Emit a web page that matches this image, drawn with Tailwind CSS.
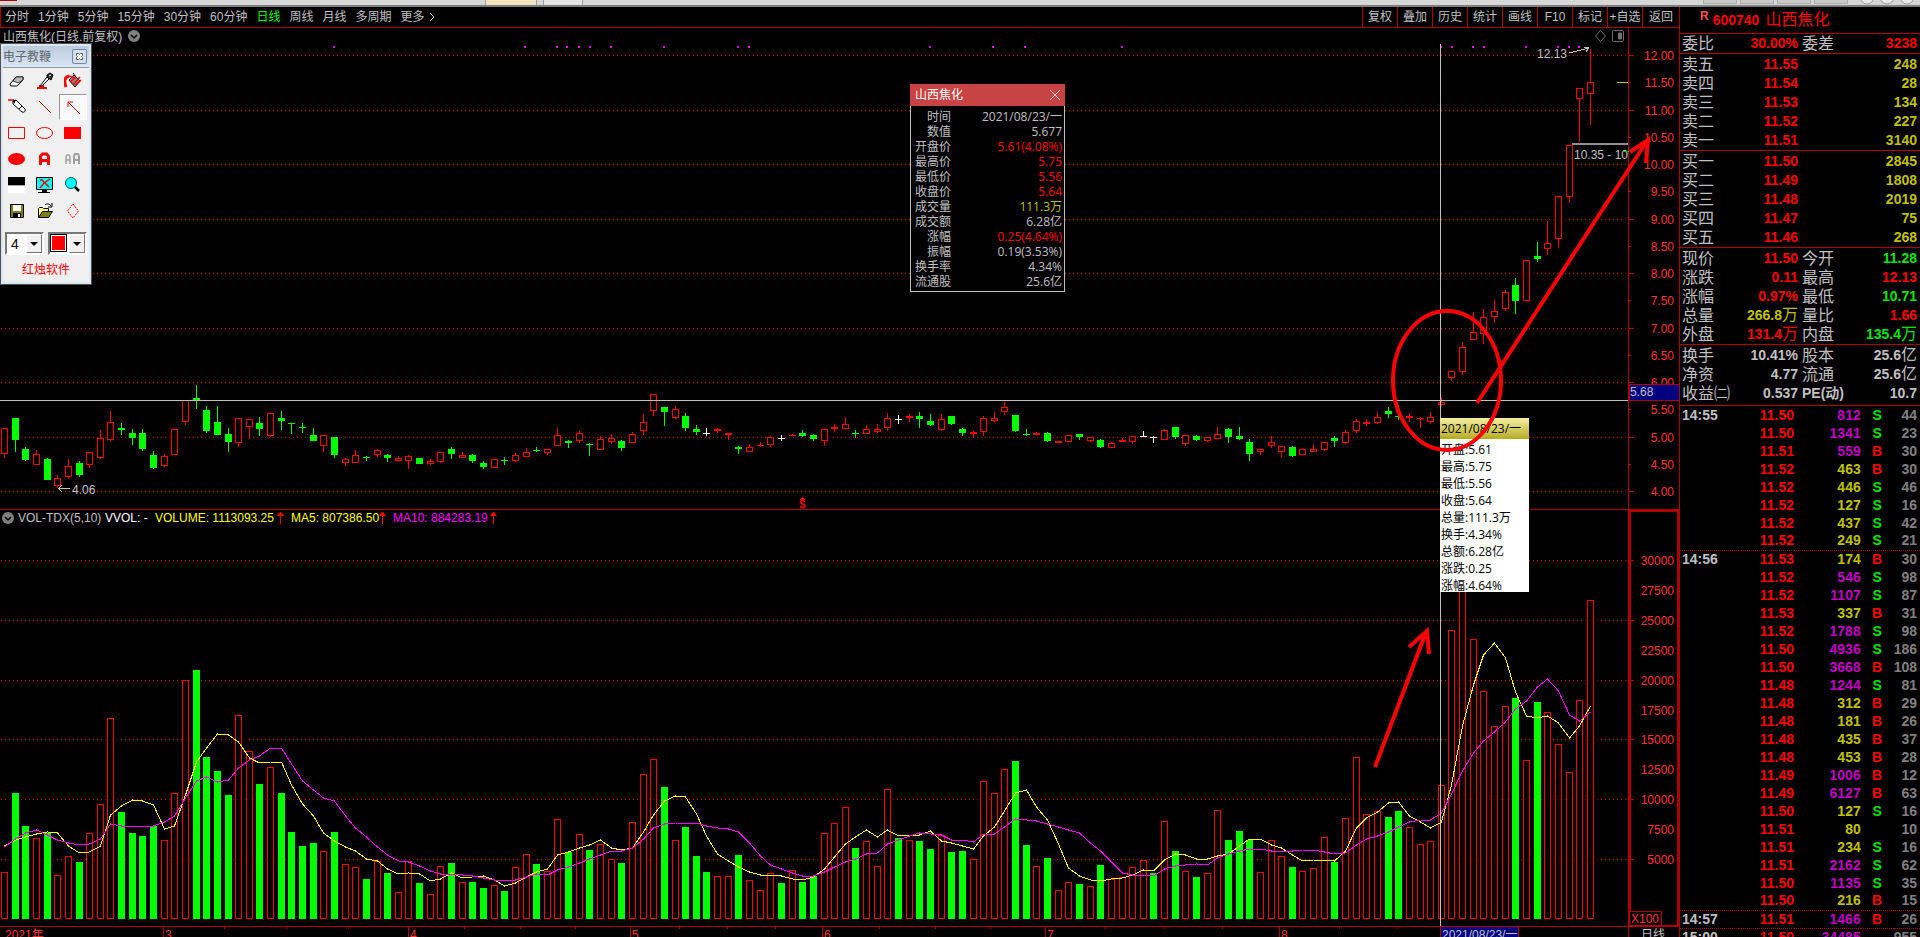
<!DOCTYPE html>
<html lang="zh-CN">
<head>
    <meta charset="UTF-8">
    <meta name="viewport" content="width=device-width, initial-scale=1.0">
    <title>山西焦化 600740 - 日线</title>
    <script src="https://cdn.jsdelivr.net/npm/@tailwindcss/browser@4"></script>
</head>

<body class="bg-black text-[#c0c0c0] text-xs font-['Liberation_Sans','Noto_Sans_CJK_SC',sans-serif]">
    <div class="h-screen flex flex-col overflow-hidden">
        <!-- 顶部窗口边缘 -->
        <div class="h-[7px] shrink-0 flex items-start bg-[#d6d6d6] border-b-2 border-[#7c7f7c] overflow-hidden">
            <div class="w-[17px] h-px bg-[#b00000] mr-auto"></div>
            <div class="w-[52px] h-[5px] bg-[#f0e4c0] border-x border-gray-400"></div>
            <div class="w-[40px] h-[5px] ml-[6px] bg-[#e6e6e6] border-x border-gray-400 mr-[1120px]"></div>
            <div class="flex gap-[3px] mr-3">
                <div class="w-[34px] h-1 bg-[#cacaca] border border-t-0 border-[#aaa]"></div>
                <div class="w-[34px] h-1 bg-[#cacaca] border border-t-0 border-[#aaa]"></div>
                <div class="w-[34px] h-1 bg-[#cacaca] border border-t-0 border-[#aaa]"></div>
                <div class="w-[34px] h-1 bg-[#cacaca] border border-t-0 border-[#aaa]"></div>
            </div>
            <svg class="w-[60px] h-[5px]" viewBox="0 0 60 5" fill="#e8e8e8" stroke="#999">
                <circle cx="7" cy="-3" r="7" /><circle cx="27" cy="-3" r="7" /><circle cx="47" cy="-3" r="7" />
            </svg>
        </div>

        <div class="flex-1 flex min-h-0">
            <!-- 左侧图表区 -->
            <main class="flex-1 min-w-0 relative">
                <nav class="h-[21px] flex justify-between border-b border-l border-[#b00000] leading-5">
                    <div class="flex gap-[9px] pl-1 whitespace-nowrap">
                        <button>分时</button>
                        <button>1分钟</button>
                        <button>5分钟</button>
                        <button>15分钟</button>
                        <button>30分钟</button>
                        <button>60分钟</button>
                        <button class="text-[#00ff00]">日线</button>
                        <button>周线</button>
                        <button>月线</button>
                        <button>多周期</button>
                        <button class="flex items-center gap-1">更多
                            <svg class="w-[6px] h-[10px]" viewBox="0 0 6 10" fill="none" stroke="#c0c0c0"><path d="M1 1l4 4-4 4" /></svg>
                        </button>
                    </div>
                    <div class="flex whitespace-nowrap">
                        <button class="w-[35px] border-l border-[#b00000]">复权</button>
                        <button class="w-[35px] border-l border-[#b00000]">叠加</button>
                        <button class="w-[35px] border-l border-[#b00000]">历史</button>
                        <button class="w-[35px] border-l border-[#b00000]">统计</button>
                        <button class="w-[35px] border-l border-[#b00000]">画线</button>
                        <button class="w-[35px] border-l border-[#b00000]">F10</button>
                        <button class="w-[35px] border-l border-[#b00000]">标记</button>
                        <button class="w-[35px] border-l border-[#b00000]">+自选</button>
                        <button class="w-[37px] border-l border-[#b00000]">返回</button>
                    </div>
                </nav>

                <div class="h-4 flex items-center">
                    <h1 class="pl-[3px] pt-px leading-4">山西焦化(日线.前复权)</h1>
                    <svg class="w-3 h-3 ml-[6px] mr-auto" viewBox="0 0 12 12"><circle cx="6" cy="6" r="6" fill="#808080" /><path d="M3 5l3 3 3-3" fill="none" stroke="#000" stroke-width="1.500" /></svg>
                    <svg class="w-[30px] h-3" viewBox="0 0 30 12" fill="none" stroke="#707070"><path d="M5.500 .5L10.500 6l-5 5.500L.5 6z" /><rect x="17.500" y=".5" width="11" height="11" rx="1" /><path d="M23.500 3h3v6h-3z" fill="#707070" /></svg>
                    <div class="w-[51px] h-4 ml-[3px] border-l border-[#b00000]"></div>
                </div>

                <svg id="chart" class="block w-full" viewBox="0 44 1679 893" shape-rendering="crispEdges"></svg>

                <!-- 成交量指标栏 -->
                <div class="absolute left-0 top-[503px] h-4 pl-[2px] flex items-center leading-4 whitespace-nowrap">
                    <svg class="w-3 h-3 mr-1" viewBox="0 0 12 12"><circle cx="6" cy="6" r="6" fill="#808080" /><path d="M3 5l3 3 3-3" fill="none" stroke="#000" stroke-width="1.500" /></svg>
                    <span class="w-[87px]">VOL-TDX(5,10)</span>
                    <span class="w-[50px] text-white">VVOL: -</span>
                    <span class="w-[122px] text-[#ffff00]">VOLUME: 1113093.25</span>
                    <svg class="w-[7px] h-3" viewBox="0 0 7 12" fill="#f00"><path d="M3 0h1l3 4H4v8H3V4H0z" /></svg>
                    <span class="ml-[7px] w-[88px] text-[#ffff00]">MA5: 807386.50</span>
                    <svg class="w-[7px] h-3" viewBox="0 0 7 12" fill="#f00"><path d="M3 0h1l3 4H4v8H3V4H0z" /></svg>
                    <span class="ml-[7px] w-[97px] text-[#ff00ff]">MA10: 884283.19</span>
                    <svg class="w-[7px] h-3" viewBox="0 0 7 12" fill="#f00"><path d="M3 0h1l3 4H4v8H3V4H0z" /></svg>
                </div>

                <!-- 数值浮窗 -->
                <section class="absolute left-[910px] top-[77px] w-[155px] bg-black border border-t-0 border-[#c0c0c0] font-['Open_Sans','Noto_Sans_CJK_SC',sans-serif]">
                    <header class="h-[22px] -mx-px px-[5px] flex items-center justify-between bg-[#c84444] text-white">
                        <h2>山西焦化</h2>
                        <button aria-label="关闭"><svg class="w-[10px] h-[10px]" viewBox="0 0 10 10" stroke="#f0c8c8"><path d="M0 0l10 10M10 0L0 10" /></svg></button>
                    </header>
                    <table class="w-full mt-[3px] mb-[2px]">
                        <tbody id="infoRows"></tbody>
                    </table>
                </section>

                <!-- 十字光标提示 -->
                <section class="absolute left-[1440px] top-[411px] w-[89px] h-[174px] bg-white text-black font-['Open_Sans','Noto_Sans_CJK_SC',sans-serif]">
                    <h2 class="h-[21px] pl-px leading-[21px] bg-gradient-to-b from-[#f6f0a0] to-[#b4ac10] whitespace-nowrap">2021/08/23/一</h2>
                    <ul id="tipRows" class="pl-px pt-[2px]"></ul>
                </section>

                <!-- 手绘标注 -->
                <svg class="absolute left-0 top-[37px] w-full pointer-events-none" viewBox="0 44 1679 893" fill="none" stroke="#f00" stroke-width="4">
                    <ellipse cx="1447" cy="380.500" rx="54" ry="69.500" />
                    <path d="M1477 403L1647 141M1630 152L1648 140L1646 163" />
                    <path d="M1375 767L1426 632M1409 647L1427 631L1429 654" />
                </svg>

                <!-- 电子教鞭工具箱 -->
                <aside class="absolute left-0 top-[36px] w-[92px] h-[242px] p-[2px] bg-[#dce6f2] border border-[#505050] text-[#404040]">
                    <header class="h-[22px] flex items-center justify-between pr-[2px] bg-gradient-to-b from-[#bccbdc] to-[#dbe6f3] border-b border-[#999]">
                        <h2 class="text-[#606870]">电子教鞭</h2>
                        <button aria-label="关闭" class="w-[15px] h-[15px] flex items-center justify-center border border-[#7888a8] rounded-xs bg-[#d4dfec]">
                            <svg class="w-[7px] h-[7px]" viewBox="0 0 7 7"><path d="M.5 .5h2l1 1 1-1h2v2l-1 1 1 1v2h-2l-1-1-1 1h-2v-2l1-1-1-1z" fill="#fff" stroke="#555" /></svg>
                        </button>
                    </header>
                    <div class="h-[214px] bg-[#f0f0f0]">
                        <div class="grid grid-cols-3 w-[84px] [&_svg]:w-[18px] [&_svg]:h-[18px] [&>button]:h-[26px] [&>button]:flex [&>button]:items-center [&>button]:justify-center">
                            <button aria-label="橡皮"><svg viewBox="0 0 18 18"><path d="M2 12l6-7h7v3l-6 6H3z" fill="#fff" stroke="#000" /><path d="M8 5h7v3l-5 3-5-2z" fill="#bbb" stroke="#000" stroke-width=".7" /></svg></button>
                            <button aria-label="画笔"><svg viewBox="0 0 18 18"><path d="M1 16h10M3 14h5" stroke="#f00" stroke-width="2" /><path d="M4 14l7-9 2 2-7 7z" fill="#fff" stroke="#000" /><path d="M11 3l3-2 3 2-2 5-4-3z" fill="#333" stroke="#000" /><path d="M13 4l2-1" stroke="#fff" /></svg></button>
                            <button aria-label="填充"><svg viewBox="0 0 18 18"><path d="M5 8l5-5 6 6-5 6z" fill="#888" stroke="#000" /><path d="M2 15C0 10 0 5 5 4" fill="none" stroke="#f00" stroke-width="3" /><path d="M5 4l6 2-5 4M9 13l7-8M12 13l5-5" fill="none" stroke="#f00" stroke-width="1.500" /><path d="M9 1l3 4" stroke="#000" /></svg></button>
                            <button aria-label="铅笔"><svg viewBox="0 0 18 18"><path d="M0 2h6" stroke="#f00" stroke-width="1.500" /><path d="M5 3l3-1 9 9c1 2-1 4-3 3L5 6z" fill="#fff" stroke="#000" /><path d="M5 3l3-1-2 4z" fill="#000" /><path d="M11 11l3-3" stroke="#000" /></svg></button>
                            <button aria-label="直线"><svg viewBox="0 0 18 18"><path d="M3 3l12 12" stroke="#f00" /></svg></button>
                            <button aria-label="箭头" class="bg-[#fafafa] border border-t-[#999] border-l-[#999] border-white"><svg viewBox="0 0 18 18"><path d="M4 4l12 12M4 9V4h5" fill="none" stroke="#f00" /></svg></button>
                            <button aria-label="矩形"><svg viewBox="0 0 18 18"><path d="M.5 3.500h16v11H.5z" fill="none" stroke="#f00" /></svg></button>
                            <button aria-label="椭圆"><svg viewBox="0 0 18 18"><ellipse cx="8.500" cy="9" rx="8" ry="5.500" fill="none" stroke="#f00" /></svg></button>
                            <button aria-label="实心矩形"><svg viewBox="0 0 18 18"><path d="M0 3h17v12H0z" fill="#f00" /></svg></button>
                            <button aria-label="实心椭圆"><svg viewBox="0 0 18 18"><ellipse cx="8.500" cy="9" rx="8.500" ry="6" fill="#f00" /></svg></button>
                            <button aria-label="文字"><svg viewBox="0 0 18 18"><path d="M4.500 15V6l2-2h4l2 2v9M4 10.500h9" fill="none" stroke="#f00" stroke-width="3" /></svg></button>
                            <button aria-label="文字大小"><svg viewBox="0 0 18 18" fill="none" stroke="#a0a0a0"><path d="M2 14V7l1-2h2l1 2v7M2 10h4" stroke-width="1.500" /><path d="M10 14V6l1-2h3l1 2v8M10 10h5" stroke-width="2" /></svg></button>
                            <button aria-label="黑白板"><svg viewBox="0 0 18 18"><path d="M0 1h17v8H0z" /><path d="M0 9h17v1H0z" fill="#aaa" /><path d="M0 10h17v7H0z" fill="#fff" /></svg></button>
                            <button aria-label="清屏"><svg viewBox="0 0 18 18"><path d="M.5 1.500h16v12H.5z" fill="#0ff" stroke="#000" /><path d="M4 4h2l7 7M14 3l-6 4-4 5" fill="none" stroke="#f00" stroke-width="1.500" /><path d="M6 14h5v2h3v1H2v-1h4z" /></svg></button>
                            <button aria-label="放大"><svg viewBox="0 0 18 18"><circle cx="7" cy="7" r="5.500" fill="#0ff" stroke="#056" /><path d="M11 11l4 4" stroke="#000" stroke-width="2.500" /></svg></button>
                            <button aria-label="保存"><svg viewBox="0 0 18 18"><path d="M2.500 2.500h13v13h-13z" fill="#808000" stroke="#000" /><path d="M5 3h8v6H5z" fill="#fff" /><path d="M5 11h8v5H5z" /><path d="M10 12h2v3h-2z" fill="#fff" /></svg></button>
                            <button aria-label="打开"><svg viewBox="0 0 18 18"><path d="M2.500 15.500V6.500l1-1h3l1 1h5v3" fill="#ffff80" stroke="#000" /><path d="M2.500 15.500l4-6h10l-4 6z" fill="#808000" stroke="#000" /><path d="M9 3c2-2 5-1 6 1m1-3v4h-4" fill="none" stroke="#000" /></svg></button>
                            <button aria-label="菱形"><svg viewBox="0 0 18 18"><path d="M9 2l5.500 7L9 16 3.500 9z" fill="none" stroke="#f00" stroke-dasharray="2 1" /></svg></button>
                        </div>
                        <div class="flex gap-1 px-[2px] mt-2">
                            <label class="relative w-[39px] h-[23px] bg-white border-2 border-[#777] border-r-white border-b-white">
                                <select aria-label="线宽" class="appearance-none w-full h-full pl-1 text-sm leading-4 text-black"><option>4</option></select>
                                <span class="absolute right-0 top-0 w-4 h-[19px] flex items-center justify-center bg-[#f0f0f0] border border-white border-r-[#777] border-b-[#777] pointer-events-none"><svg class="w-2 h-1" viewBox="0 0 8 4"><path d="M0 0h8L4 4z" /></svg></span>
                            </label>
                            <label class="relative w-[39px] h-[23px] bg-white border-2 border-[#777] border-r-white border-b-white">
                                <select aria-label="颜色" class="appearance-none block w-[17px] h-[18px] border border-black bg-[#ff0000] text-transparent outline outline-white -outline-offset-2"><option>红</option></select>
                                <span class="absolute right-0 top-0 w-4 h-[19px] flex items-center justify-center bg-[#f0f0f0] border border-white border-r-[#777] border-b-[#777] pointer-events-none"><svg class="w-2 h-1" viewBox="0 0 8 4"><path d="M0 0h8L4 4z" /></svg></span>
                            </label>
                        </div>
                        <p class="mt-[7px] text-center leading-4 text-[#ff0000]">红烛软件</p>
                    </div>
                </aside>
            </main>

            <!-- 右侧行情栏 -->
            <aside class="w-[241px] shrink-0 border-l border-[#b00000] text-sm font-bold">
                <h2 class="h-[27px] flex items-center pl-5 text-[#ff0000] border-b border-[#b00000]">
                    <span class="text-xs text-[#ff5050] self-start leading-[18px]">R</span>
                    <span class="ml-1">600740</span>
                    <span class="ml-[6px] text-base font-normal">山西焦化</span>
                </h2>
                <div id="ratio" class="h-5 border-b border-[#b00000]"></div>
                <div id="sell" class="pt-px border-b border-[#b00000]"></div>
                <div id="buy" class="pt-px border-b border-[#b00000]"></div>
                <div id="quote" class="pt-px border-b border-[#b00000]"></div>
                <div id="base" class="pt-px pb-[2px] border-b border-[#b00000]"></div>
                <table class="w-full">
                    <tbody id="ticks"></tbody>
                </table>
            </aside>
        </div>
    </div>

    <script>
        // 每根K线: [类型, 最高, 实体上, 实体下, 最低, 成交量顶]  r=阳 g=阴 w=平盘(绿量) W=平盘(红量)
        const bars = [
            ['r',428,428,454,458,872],['g',418,418,440,452,793],['g',447,449,460,461,826],['r',450,454,465,465,838],['g',458,459,480,480,833],
            ['r',475,478,486,488,875],['r',459,466,477,479,856],['g',461,463,475,477,862],['r',452,452,465,468,833],['r',430,438,458,459,804],
            ['r',411,422,440,441,718],['g',423,428,430,435,812],['g',429,433,438,445,833],['g',429,433,449,451,836],['g',451,455,468,469,826],
            ['r',454,456,466,467,840],['r',429,429,455,455,793],['r',400,400,422,425,680],['g',385,398,401,409,670],['g',406,410,431,433,757],
            ['g',406,422,435,435,771],['g',428,434,442,452,795],['r',418,418,443,447,715],['r',419,419,427,439,751],['g',417,423,429,436,784],
            ['r',413,413,436,437,767],['g',411,418,421,430,793],['g',423,423,424,434,832],['g',423,427,428,433,846],['g',428,435,441,441,843],
            ['r',435,435,446,452,851],['g',437,437,455,458,832],['r',458,459,463,466,864],['r',450,455,463,463,867],['g',456,457,458,461,879],
            ['r',449,450,455,457,861],['g',454,455,458,462,873],['r',456,458,461,461,892],['r',455,456,461,469,861],['g',458,458,464,464,883],
            ['r',459,461,464,465,894],['r',452,452,462,463,866],['g',447,449,454,459,863],['r',452,455,458,458,882],['g',454,455,461,463,882],
            ['g',461,463,467,469,888],['r',459,459,468,468,885],['g',457,460,461,465,891],['r',453,455,461,462,867],['r',448,452,457,457,854],
            ['g',447,450,451,452,864],['r',449,449,453,455,871],['r',428,435,446,446,819],['g',440,441,443,448,852],['r',431,433,441,443,834],
            ['g',443,444,445,456,850],['r',436,439,450,450,844],['r',434,438,442,444,859],['g',440,441,448,451,863],['r',432,434,443,443,822],
            ['r',414,422,431,435,774],['r',394,394,411,416,759],['g',407,407,412,426,787],['r',406,409,418,419,840],['g',413,416,428,431,827],
            ['g',425,429,432,435,856],['w',428,433,434,436,872],['r',428,429,431,433,876],['r',433,433,435,440,876],['g',446,447,449,454,855],
            ['r',444,447,452,452,880],['r',442,445,446,447,890],['r',436,437,445,447,873],['w',435,438,439,441,883],['r',434,435,436,436,870],
            ['g',430,433,436,437,882],['g',434,435,439,441,876],['r',429,429,441,446,833],['r',424,427,429,432,823],['r',417,424,429,429,807],
            ['g',430,433,434,438,848],['r',425,429,434,434,841],['r',424,429,432,433,866],['r',413,418,428,431,789],['w',415,419,420,424,838],
            ['r',414,416,418,422,840],['g',412,416,419,428,841],['g',414,421,425,426,849],['r',414,419,430,431,835],['g',416,416,424,425,852],
            ['g',428,429,433,436,851],['r',431,432,434,438,859],['r',416,418,432,436,781],['r',412,418,421,422,793],['r',402,407,412,415,769],
            ['g',415,415,431,432,761],['g',429,434,435,436,845],['r',432,433,435,435,866],['g',432,433,441,442,858],['r',441,441,443,443,890],
            ['r',435,435,442,442,882],['g',434,434,437,440,884],['r',437,437,441,442,886],['g',439,440,447,448,865],['r',442,443,448,448,879],
            ['r',438,440,442,442,877],['r',436,436,442,444,867],['W',431,436,437,437,860],['w',436,437,438,443,873],['r',429,430,440,440,821],
            ['g',427,427,437,439,851],['r',435,435,444,446,871],['g',435,436,440,441,877],['r',437,437,441,442,873],['r',427,434,439,439,810],
            ['g',428,429,437,443,840],['g',427,436,439,440,831],['g',439,442,454,461,840],['r',449,449,452,455,872],['r',436,442,446,448,840],
            ['r',446,446,452,457,856],['g',446,447,456,457,867],['r',449,449,455,455,871],['r',444,449,452,452,868],['r',442,442,450,451,837],
            ['g',436,438,441,447,862],['r',430,432,443,444,818],['r',419,421,431,433,757],['r',419,422,424,426,814],['r',412,417,423,424,811],
            ['g',407,411,414,418,817],['g',405,416,417,420,811],['r',413,416,418,422,827],['r',417,418,419,428,844],['r',412,417,422,424,841],
            ['r',397,402,405,406,785],['r',371,371,378,381,630],['r',342,347,372,375,529],['r',312,332,340,340,639],['r',309,317,334,344,691],
            ['r',300,311,317,323,726],['r',290,292,309,311,706],['g',278,285,301,314,698],['r',260,260,301,301,760],['g',242,256,259,262,702],
            ['r',221,243,249,255,712],['r',196,196,239,248,744],['r',145,145,197,203,772],['r',88,88,99,142,700],['r',49,82,94,125,600]
        ];
        const BASE = 919;
        const barX = i => Math.floor(4.5 + 10.643 * i);
        const out = [];
        const line = (x1, y1, x2, y2, c, extra = '') => out.push(`<path d="M${x1} ${y1}L${x2} ${y2}" fill="none" stroke="${c}" ${extra}/>`);
        const text = (x, y, s, c, anchor = 'start') => out.push(`<text x="${x}" y="${y}" fill="${c}" font-size="12" text-anchor="${anchor}">${s}</text>`);

        // 网格与坐标
        const prices = ['12.00','11.50','11.00','10.50','10.00','9.50','9.00','8.50','8.00','7.50','7.00','6.50','6.00','5.50','5.00','4.50','4.00'];
        prices.forEach((p, i) => {
            const y = Math.round(55 + i * 27.25) + 0.5;
            if (i % 2 === 0) line(1, y, 1628, y, '#b00000', 'stroke-dasharray="1 3"');
            line(1629, y, i % 2 ? 1631 : 1634, y, '#b00000');
            text(1674, y + 4, p, '#ff3232', 'end');
        });
        [30000, 27500, 25000, 22500, 20000, 17500, 15000, 12500, 10000, 7500, 5000].forEach((v, i) => {
            const y = Math.round(560 + i * 29.9) + 0.5;
            if (i % 2 === 0) line(1, y, 1628, y, '#b00000', 'stroke-dasharray="1 3"');
            line(1629, y, i % 2 ? 1631 : 1634, y, '#b00000');
            text(1674, y + 4, v, '#ff3232', 'end');
        });
        line(1628.5, 44, 1628.5, 937, '#b00000');
        line(0, 509.5, 1679, 509.5, '#b00000');
        line(0, 926.5, 1679, 926.5, '#b00000');
        out.push('<rect x="1630" y="511" width="48" height="415" fill="none" stroke="#b00000" stroke-width="2"/>');
        out.push('<rect x="1629.500" y="911.500" width="32" height="14" fill="#000" stroke="#b00000"/>');
        text(1631, 923, 'X100', '#ff3232');

        // 月份刻度
        [[4, '2021年'], [164, '3'], [409, '4'], [631, '5'], [823, '6'], [1046, '7'], [1280, '8']].forEach(([x, s]) => {
            if (x > 4) line(x - 0.5, 927, x - 0.5, 937, '#b00000');
            text(x + 1, 939, s, '#ff3232');
        });
        [224, 286, 348, 464, 520, 575, 679, 727, 775, 879, 935, 990, 1105, 1163, 1222, 1339, 1397].forEach(x => line(x + 0.5, 927, x + 0.5, 929, '#b00000'));
        text(1641, 939, '日线', '#c0c0c0');

        // K线与成交量
        bars.forEach(([t, hi, top, bot, lo, vol], i) => {
            const x = barX(i);
            const c = t === 'r' ? '#ff0000' : t === 'g' ? '#00ff00' : '#ffffff';
            if (lo > hi) line(x + 0.5, hi, x + 0.5, lo, c);
            if (t === 'r' && bot - top > 2) out.push(`<rect x="${x - 2.5}" y="${top + 0.5}" width="6" height="${bot - top - 1}" fill="#000" stroke="${c}"/>`);
            else out.push(`<rect x="${x - 3}" y="${top}" width="7" height="${Math.max(1, bot - top)}" fill="${c}"/>`);
            if (t === 'r' || t === 'W') out.push(`<rect x="${x - 2.5}" y="${vol + 0.5}" width="6" height="${BASE - vol - 1}" fill="#000" stroke="#f00"/>`);
            else out.push(`<rect x="${x - 3}" y="${vol}" width="7" height="${BASE - vol}" fill="#0f0"/>`);
        });

        // 均量线, 前段取窗口外的历史值
        const average = (n, head) => bars.map((b, i) => {
            if (i < head.length) return head[i];
            return bars.slice(i - n + 1, i + 1).reduce((s, k) => s + k[5], 0) / n;
        });
        const curve = (ys, c) => out.push(`<polyline points="${ys.map((y, i) => (barX(i) + 0.5) + ',' + Math.round(y)).join(' ')}" fill="none" stroke="${c}"/>`);
        curve(average(5, [846, 840, 837, 834]), '#ffff00');
        curve(average(10, [847, 839, 833, 830, 835, 840, 843, 845, 844]), '#ff00ff');

        // 信号点
        [334, 525, 557, 567, 579, 590, 611, 664, 738, 749, 930, 993, 1025, 1122, 1441, 1452, 1473, 1484, 1526, 1558, 1569, 1579]
            .forEach(x => out.push(`<rect x="${x - 1}" y="46" width="2" height="2" fill="#f0f"/>`));

        // 图上文字
        text(1537, 58, '12.13', '#c0c0c0');
        line(1569, 53, 1589, 48, '#c0c0c0');
        out.push('<path d="M1584 47L1589 48L1586 52" fill="none" stroke="#c0c0c0"/>');
        line(1617, 82.5, 1628, 82.5, '#c0c000');
        line(1572, 144, 1628, 144, '#909090', 'stroke-width="2"');
        text(1574, 159, '10.35 - 10', '#c0c0c0');
        line(1624, 151.5, 1629, 151.5, '#00c000');
        line(59, 488.5, 70, 488.5, '#c0c0c0');
        out.push('<path d="M62 485L59 488.500L62 492" fill="none" stroke="#c0c0c0"/>');
        text(72, 494, '4.06', '#c0c0c0');
        out.push('<path d="M799 500h7l-3.500-3z" fill="#f00"/><text x="799" y="508" font-size="10" font-weight="bold" fill="#f00">S</text>');

        // 十字光标
        line(0, 400.5, 1628, 400.5, '#c0c0c0');
        line(1440.5, 44, 1440.5, 926, '#c0c0c0');
        out.push('<rect x="1629.500" y="384.500" width="50" height="16" fill="#000080" stroke="#b00000"/>');
        text(1630, 396, '5.68', '#c0c0c0');
        out.push('<rect x="1440.500" y="926.500" width="78" height="14" fill="#000080" stroke="#b00000"/>');
        text(1442, 939, '2021/08/23/一', '#c0c0c0');
        document.getElementById('chart').innerHTML = out.join('');

        // 浮窗
        const R = 'text-[#ff0000]', G = 'text-[#00e600]', Y = 'text-[#c0c000]', N = 'text-[#c0c0c0]', P = 'text-[#c000c0]';
        document.getElementById('infoRows').innerHTML = [
            ['时间', '2021/08/23/一', N], ['数值', '5.677', N], ['开盘价', '5.61(4.08%)', R], ['最高价', '5.75', R],
            ['最低价', '5.56', R], ['收盘价', '5.64', R], ['成交量', '111.3万', Y], ['成交额', '6.28亿', N],
            ['涨幅', '0.25(4.64%)', R], ['振幅', '0.19(3.53%)', N], ['换手率', '4.34%', N], ['流通股', '25.6亿', N]
        ].map(([k, v, c]) => `<tr class="h-[15px] leading-[15px] whitespace-nowrap"><th class="w-10 p-0 font-normal text-right">${k}</th><td class="p-0 pr-[2px] text-right ${c}">${v}</td></tr>`).join('');

        document.getElementById('tipRows').innerHTML = ['开盘:5.61', '最高:5.75', '最低:5.56', '收盘:5.64', '总量:111.3万', '换手:4.34%', '总额:6.28亿', '涨跌:0.25', '涨幅:4.64%']
            .map(s => `<li class="h-[17px] leading-[17px]">${s}</li>`).join('');

        // 行情
        const row = ([a, b, bc, c, d, dc]) => `<div class="h-[19px] leading-[19px] pl-[2px] pr-[3px] flex whitespace-nowrap">
            <span class="w-12 text-base leading-[19px] font-normal">${a}</span>
            <span class="w-[68px] text-right ${bc} [&>i]:text-base [&>i]:leading-4 [&>i]:font-normal [&>i]:not-italic">${b}</span>
            <span class="ml-[4px] w-12 ${c === 'PE(动)' ? 'text-sm' : 'text-base font-normal'} leading-[19px]">${c}</span>
            <span class="flex-1 text-right ${dc} [&>i]:text-base [&>i]:leading-4 [&>i]:font-normal [&>i]:not-italic">${d}</span></div>`;
        const fill = (id, rows) => document.getElementById(id).innerHTML = rows.map(row).join('');
        fill('ratio', [['委比', '30.00%', R, '委差', '3238', R]]);
        fill('sell', [['卖五', '11.55', R, '', '248', Y], ['卖四', '11.54', R, '', '28', Y], ['卖三', '11.53', R, '', '134', Y], ['卖二', '11.52', R, '', '227', Y], ['卖一', '11.51', R, '', '3140', Y]]);
        fill('buy', [['买一', '11.50', R, '', '2845', Y], ['买二', '11.49', R, '', '1808', Y], ['买三', '11.48', R, '', '2019', Y], ['买四', '11.47', R, '', '75', Y], ['买五', '11.46', R, '', '268', Y]]);
        fill('quote', [['现价', '11.50', R, '今开', '11.28', G], ['涨跌', '0.11', R, '最高', '12.13', R], ['涨幅', '0.97%', R, '最低', '10.71', G],
            ['总量', '266.8<i>万</i>', Y, '量比', '1.66', R], ['外盘', '131.4<i>万</i>', R, '内盘', '135.4<i>万</i>', G]]);
        fill('base', [['换手', '10.41%', N, '股本', '25.6<i>亿</i>', N], ['净资', '4.77', N, '流通', '25.6<i>亿</i>', N], ['收益㈡', '0.537', N, 'PE(动)', '10.7', N]]);

        // 逐笔成交
        const ticks = [
            ['14:55','11.50',812,'S',44],['','11.50',1341,'S',23],['','11.51',559,'B',30],['','11.52',463,'B',30],['','11.52',446,'S',46],['','11.52',127,'S',16],['','11.52',437,'S',42],['','11.52',249,'S',21],
            ['14:56','11.53',174,'B',30],['','11.52',546,'S',98],['','11.52',1107,'S',87],['','11.53',337,'B',31],['','11.52',1788,'S',98],['','11.50',4936,'S',186],['','11.50',3668,'B',108],['','11.48',1244,'S',81],
            ['','11.48',312,'B',29],['','11.48',181,'B',26],['','11.48',435,'B',37],['','11.48',453,'B',28],['','11.49',1006,'B',12],['','11.49',6127,'B',63],['','11.50',127,'S',16],['','11.51',80,'',10],
            ['','11.51',234,'S',16],['','11.51',2162,'S',62],['','11.50',1135,'S',35],['','11.50',216,'B',15],['14:57','11.51',1466,'B',26],['15:00','11.50',34485,'',955]
        ];
        document.getElementById('ticks').innerHTML = ticks.map(([t, p, v, d, n], i) => `<tr class="h-[18px] leading-[17px] ${t && i ? 'border-t border-dotted border-[#b00000]' : ''}">
            <td class="w-[60px] p-0 pl-[2px]">${t}</td><td class="w-[56px] p-0 text-right ${R}">${p}</td><td class="w-[68px] p-0 text-right ${v >= 500 ? P : Y}">${v}</td>
            <td class="w-[34px] p-0 text-center ${d === 'S' ? G : R}">${d}</td><td class="w-[22px] p-0 pr-[3px] text-right text-[#808080]">${n}</td></tr>`).join('');
    </script>
</body>

</html>
